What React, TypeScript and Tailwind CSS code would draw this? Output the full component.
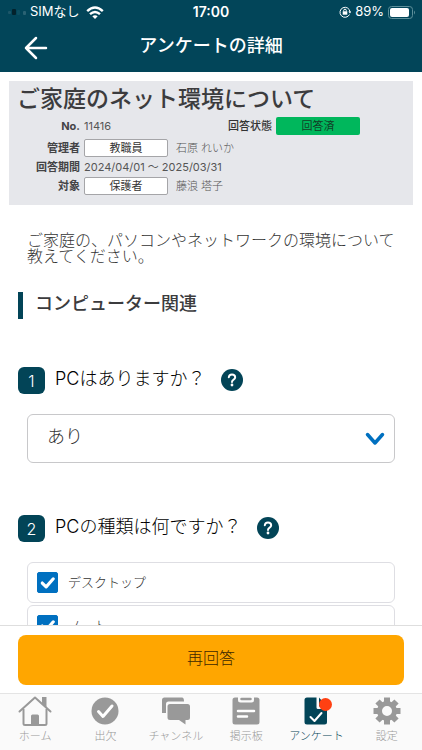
import React, { useState } from "react";

type TabId = "home" | "attendance" | "channel" | "board" | "survey" | "settings";

interface Tab {
  id: TabId;
  label: string;
  icon: React.ReactNode;
  badge?: boolean;
}

const tabs: Tab[] = [
  {
    id: "home",
    label: "ホーム",
    icon: (
      <svg viewBox="0 0 34 30" className="h-[30px] w-[34px]" fill="none" stroke="currentColor" strokeWidth="2">
        <path d="M1.5 15.5 L17 1.5 L32.5 15.5" strokeLinecap="round" strokeLinejoin="round" />
        <path d="M5.5 13v14.5q0 1.5 1.5 1.5h20q1.5 0 1.5-1.5V13" />
        <path d="M24 1h4.500v11L24 8z" fill="currentColor" stroke="none" />
        <path d="M13 29v-9q0-1.500 1.500-1.500h5q1.500 0 1.500 1.500v9z" fill="currentColor" stroke="none" />
      </svg>
    ),
  },
  {
    id: "attendance",
    label: "出欠",
    icon: (
      <svg viewBox="0 0 28 28" className="size-7" fill="none">
        <circle cx="14" cy="14" r="13.500" fill="currentColor" />
        <path d="M7.500 14.500l4.500 5 9-10.500" stroke="white" strokeWidth="3" strokeLinecap="round" strokeLinejoin="round" />
      </svg>
    ),
  },
  {
    id: "channel",
    label: "チャンネル",
    icon: (
      <svg viewBox="0 0 28 28" className="size-7" fill="currentColor">
        <path d="M0 16V3Q0 .5 2.500 .5H20Q22 .5 22 4.500H6.500Q4 4.500 4 7V16Z" />
        <path d="M8 7h17.500Q28 7 28 9.500v11q0 2.500-2.500 2.500H23.500v4.500L17 23H8q-2.500 0-2.500-2.500v-11Q5.500 7 8 7z" />
      </svg>
    ),
  },
  {
    id: "board",
    label: "掲示板",
    icon: (
      <svg viewBox="0 0 28 28" className="size-7">
        <path
          d="M3 .5h3V3q0 2.500 2.500 2.500h11Q22 5.500 22 3V.5h3Q27.500 .5 27.500 3v22q0 2.500-2.500 2.500H3Q.5 27.500 .5 25V3Q.5 .5 3 .5z"
          fill="currentColor"
        />
        <path d="M9.500 2h9" stroke="currentColor" strokeWidth="2.500" strokeLinecap="round" />
        <path d="M6 14h16M6 19.500h9" stroke="white" strokeWidth="2.500" strokeLinecap="round" />
      </svg>
    ),
  },
  {
    id: "survey",
    label: "アンケート",
    badge: true,
    icon: (
      <svg viewBox="0 0 24 28" className="h-7 w-6" fill="none">
        <path d="M3 .5h9.500v10Q12.500 12 14 12h9v13q0 2.500-2.500 2.500H3Q.5 27.500 .5 25V3Q.5 .5 3 .5z" fill="currentColor" />
        <path d="M15 .5L23 9.500H15z" fill="currentColor" />
        <path d="M6.500 20l4 4 7-8" stroke="white" strokeWidth="2" strokeLinecap="round" strokeLinejoin="round" />
      </svg>
    ),
  },
  {
    id: "settings",
    label: "設定",
    icon: (
      <svg viewBox="0 0 28 28" className="size-7">
        <g stroke="currentColor" strokeWidth="6">
          <path d="M14 .5v6M14 21.500v6M.5 14h6M21.500 14h6" />
          <path d="M4.500 4.500l4.200 4.200M19.300 19.300l4.200 4.200M4.500 23.500l4.200-4.200M19.300 8.700l4.200-4.200" />
        </g>
        <circle cx="14" cy="14" r="7.500" fill="none" stroke="currentColor" strokeWidth="5" />
      </svg>
    ),
  },
];

const StatusBar: React.FC = () => (
  <div className="relative flex h-6 items-center justify-between pr-1.5 pl-2 text-[13px]">
    <div className="flex items-center gap-1">
      <svg viewBox="0 0 18 8" className="h-2 w-[18px]">
        <rect x="0" y="3" width="3" height="3" rx="1" fill="#1d5668" />
        <rect x="4" y="1" width="4" height="6" rx="1" fill="#03222c" />
        <rect x="9" y="2" width="3" height="5" rx="1" fill="#0d4e60" />
        <rect x="15" y="3" width="3" height="4" rx="1" fill="#2a6273" />
      </svg>
      <span>SIMなし</span>
      <svg viewBox="0 0 18 13" className="ml-0.5 h-[13px] w-[18px]" fill="none" stroke="white" strokeWidth="2.400">
        <path d="M1.200 5.200q7.800-7.200 15.600 0" />
        <path d="M4 8.200q5-4.600 10 0" />
        <path d="M6.300 10.300q2.700-2.200 5.400 0L9 13z" fill="white" stroke="none" />
      </svg>
    </div>
    <span className="absolute left-1/2 -translate-x-1/2 text-sm font-semibold">17:00</span>
    <div className="flex items-center gap-1">
      <svg viewBox="0 0 12 12" className="size-3" fill="none" stroke="white">
        <path d="M10.500 8.500A5 5 0 1 1 11 6" />
        <path d="M9.300 5.500h3L11 7.500z" fill="white" stroke="none" />
        <rect x="3.700" y="5.300" width="4.600" height="3.400" fill="white" stroke="none" />
        <path d="M4.700 5.500V4.500a1.300 1.300 0 0 1 2.600 0v1" />
      </svg>
      <span>89%</span>
      <svg viewBox="0 0 28 13" className="h-[13px] w-7">
        <rect x=".5" y=".5" width="24" height="12" rx="3" fill="none" stroke="#5d8f9a" />
        <rect x="2" y="2" width="19" height="9" rx="2" fill="white" />
        <path d="M26 4.500q2 2 0 4z" fill="#5d8f9a" />
      </svg>
    </div>
  </div>
);

const InfoLabel: React.FC<{ children: React.ReactNode }> = ({ children }) => (
  <span className="w-[71px] text-right font-bold text-[#444446]">{children}</span>
);

const Tag: React.FC<{ children: React.ReactNode }> = ({ children }) => (
  <span className="flex h-[18px] w-21 items-center justify-center rounded-xs border border-[#a5a5a8] bg-white text-[#333]">
    {children}
  </span>
);

interface QuestionTitleProps {
  no: number;
  id: string;
  children: React.ReactNode;
}

const QuestionTitle: React.FC<QuestionTitleProps> = ({ no, id, children }) => (
  <div className="flex items-start">
    <span className="flex size-[27px] items-center justify-center rounded-md bg-[#024457] text-base font-light text-white">
      {no}
    </span>
    <h3 id={id} className="ml-2.5 text-lg leading-6 font-light text-black">
      {children}
    </h3>
    <button aria-label="ヘルプ" className="ml-4 flex h-[26px] items-center">
      <svg viewBox="0 0 22 22" className="size-[22px]" fill="none">
        <circle cx="11" cy="11" r="11" fill="#024457" />
        <path
          d="M7.800 8.300Q8 5.400 11 5.400T14.200 8.200Q14.200 9.700 12.600 10.600Q11 11.500 11 13"
          stroke="white"
          strokeWidth="2"
          strokeLinecap="round"
        />
        <circle cx="11" cy="16" r="1.400" fill="white" />
      </svg>
    </button>
  </div>
);

interface CheckItemProps {
  label: string;
  checked: boolean;
  onChange: () => void;
}

const CheckItem: React.FC<CheckItemProps> = ({ label, checked, onChange }) => (
  <label className="flex h-[41px] items-center gap-2.5 rounded-md border border-[#dedee3] px-[9px]">
    <span className="relative size-[21px]">
      <input
        type="checkbox"
        checked={checked}
        onChange={onChange}
        className="peer block size-[21px] appearance-none rounded-xs border border-[#0070c0] checked:bg-[#0070c0]"
      />
      <svg
        viewBox="0 0 20 20"
        className="pointer-events-none absolute inset-0 hidden size-[21px] peer-checked:block"
        fill="none"
        stroke="white"
        strokeWidth="3"
        strokeLinecap="round"
        strokeLinejoin="round"
      >
        <path d="M5 10.500l3.700 3.700L15.500 6.500" />
      </svg>
    </span>
    <span className="text-[13px] font-light text-[#333]">{label}</span>
  </label>
);

const App: React.FC = () => {
  const [hasPc, setHasPc] = useState("あり");
  const [pcTypes, setPcTypes] = useState<string[]>(["デスクトップ", "ノート"]);
  const [activeTab, setActiveTab] = useState<TabId>("survey");

  const togglePcType = (type: string) => {
    setPcTypes((prev) =>
      prev.includes(type) ? prev.filter((t) => t !== type) : [...prev, type]
    );
  };

  return (
    <div className="flex h-screen flex-col bg-white font-['Inter','Noto_Sans_CJK_JP',sans-serif]">
      <header className="bg-[#024559] text-white">
        <StatusBar />
        <div className="grid h-12 grid-cols-[72px_1fr_72px] items-center">
          <button aria-label="戻る" className="flex h-12 items-center pl-6">
            <svg
              viewBox="0 0 24 24"
              className="size-6"
              fill="none"
              stroke="currentColor"
              strokeWidth="2.500"
              strokeLinecap="round"
              strokeLinejoin="round"
            >
              <path d="M22 12H2M12 2L2 12l10 10" />
            </svg>
          </button>
          <h1 className="pb-1 text-center text-lg font-medium">アンケートの詳細</h1>
        </div>
      </header>

      <main className="min-h-0 flex-1 overflow-y-auto [scrollbar-width:none]">
        <section className="mx-[9px] mt-[9px] bg-[#e6e7eb] pb-2.5 text-[11px] text-[#555]">
          <h2 className="pl-2 text-[23px] leading-9 font-medium text-[#3c3c3e]">
            ご家庭のネット環境について
          </h2>
          <div className="mb-1 flex h-[18px] items-center">
            <InfoLabel>No.</InfoLabel>
            <span className="ml-1 w-36">11416</span>
            <span className="font-medium text-[#333]">回答状態</span>
            <span className="ml-1 flex h-[18px] w-21 items-center justify-center rounded-xs bg-[#00b75c] text-[#123f27]">
              回答済
            </span>
          </div>
          <div className="flex flex-col gap-px">
            <div className="flex h-[18px] items-center gap-1">
              <InfoLabel>管理者</InfoLabel>
              <Tag>教職員</Tag>
              <span className="ml-1 font-light">石原 れいか</span>
            </div>
            <div className="flex h-[18px] items-center gap-1">
              <InfoLabel>回答期間</InfoLabel>
              <span>2024/04/01 〜 2025/03/31</span>
            </div>
            <div className="flex h-[18px] items-center gap-1">
              <InfoLabel>対象</InfoLabel>
              <Tag>保護者</Tag>
              <span className="ml-1 font-light">藤浪 塔子</span>
            </div>
          </div>
        </section>

        <p className="mt-[27px] ml-[27px] text-base leading-4 font-light text-[#333]">
          ご家庭の、パソコンやネットワークの環境について
          <br />
          教えてください。
        </p>

        <div className="mt-7 px-[18px]">
          <h2 className="flex h-[27px] items-center border-l-5 border-[#024457] pb-1 pl-3 text-lg font-medium text-[#3c3c3e]">
            コンピューター関連
          </h2>

          <div className="mt-12">
            <QuestionTitle no={1} id="q1">
              PCはありますか？
            </QuestionTitle>
            <div className="relative mx-[9px] mt-5">
              <select
                aria-labelledby="q1"
                value={hasPc}
                onChange={(e) => setHasPc(e.target.value)}
                className="h-[49px] w-full appearance-none rounded-md border border-[#c8c8ca] bg-white pb-1 pl-[19px] text-lg font-light text-[#333]"
              >
                <option>あり</option>
                <option>なし</option>
              </select>
              <svg
                viewBox="0 0 20 14"
                className="pointer-events-none absolute top-[18px] right-2.5 h-3.5 w-5"
                fill="none"
                stroke="#0070c0"
                strokeWidth="3.500"
                strokeLinecap="round"
                strokeLinejoin="round"
              >
                <path d="M2.500 2.500l7.500 8.500 7.500-8.500" />
              </svg>
            </div>
          </div>

          <div className="mt-[52px]">
            <QuestionTitle no={2} id="q2">
              PCの種類は何ですか？
            </QuestionTitle>
            <div role="group" aria-labelledby="q2" className="mx-[9px] mt-5 flex flex-col gap-0.5 pb-6">
              {["デスクトップ", "ノート"].map((type) => (
                <CheckItem
                  key={type}
                  label={type}
                  checked={pcTypes.includes(type)}
                  onChange={() => togglePcType(type)}
                />
              ))}
            </div>
          </div>
        </div>
      </main>

      <div className="border-t border-[#dedede] px-[18px] pt-[9px] pb-2">
        <button className="h-[50px] w-full rounded-lg bg-[#ffa600] pb-1 text-base font-light text-[#3d2800]">
          再回答
        </button>
      </div>

      <nav className="grid h-[57px] grid-cols-6 border-t border-[#e4e4e4] bg-[#fafafa]">
        {tabs.map((tab) => (
          <button
            key={tab.id}
            onClick={() => setActiveTab(tab.id)}
            className={`flex flex-col items-center text-[11px] ${
              tab.id === activeTab ? "text-[#024457]" : "text-[#999]"
            }`}
          >
            <span className="relative flex h-[34px] items-center">
              {tab.icon}
              {tab.badge && (
                <span className="absolute top-1 -right-1 size-[13px] rounded-full bg-[#ff4012]" />
              )}
            </span>
            <span className="leading-4 font-light">{tab.label}</span>
          </button>
        ))}
      </nav>
    </div>
  );
};

export default App;
